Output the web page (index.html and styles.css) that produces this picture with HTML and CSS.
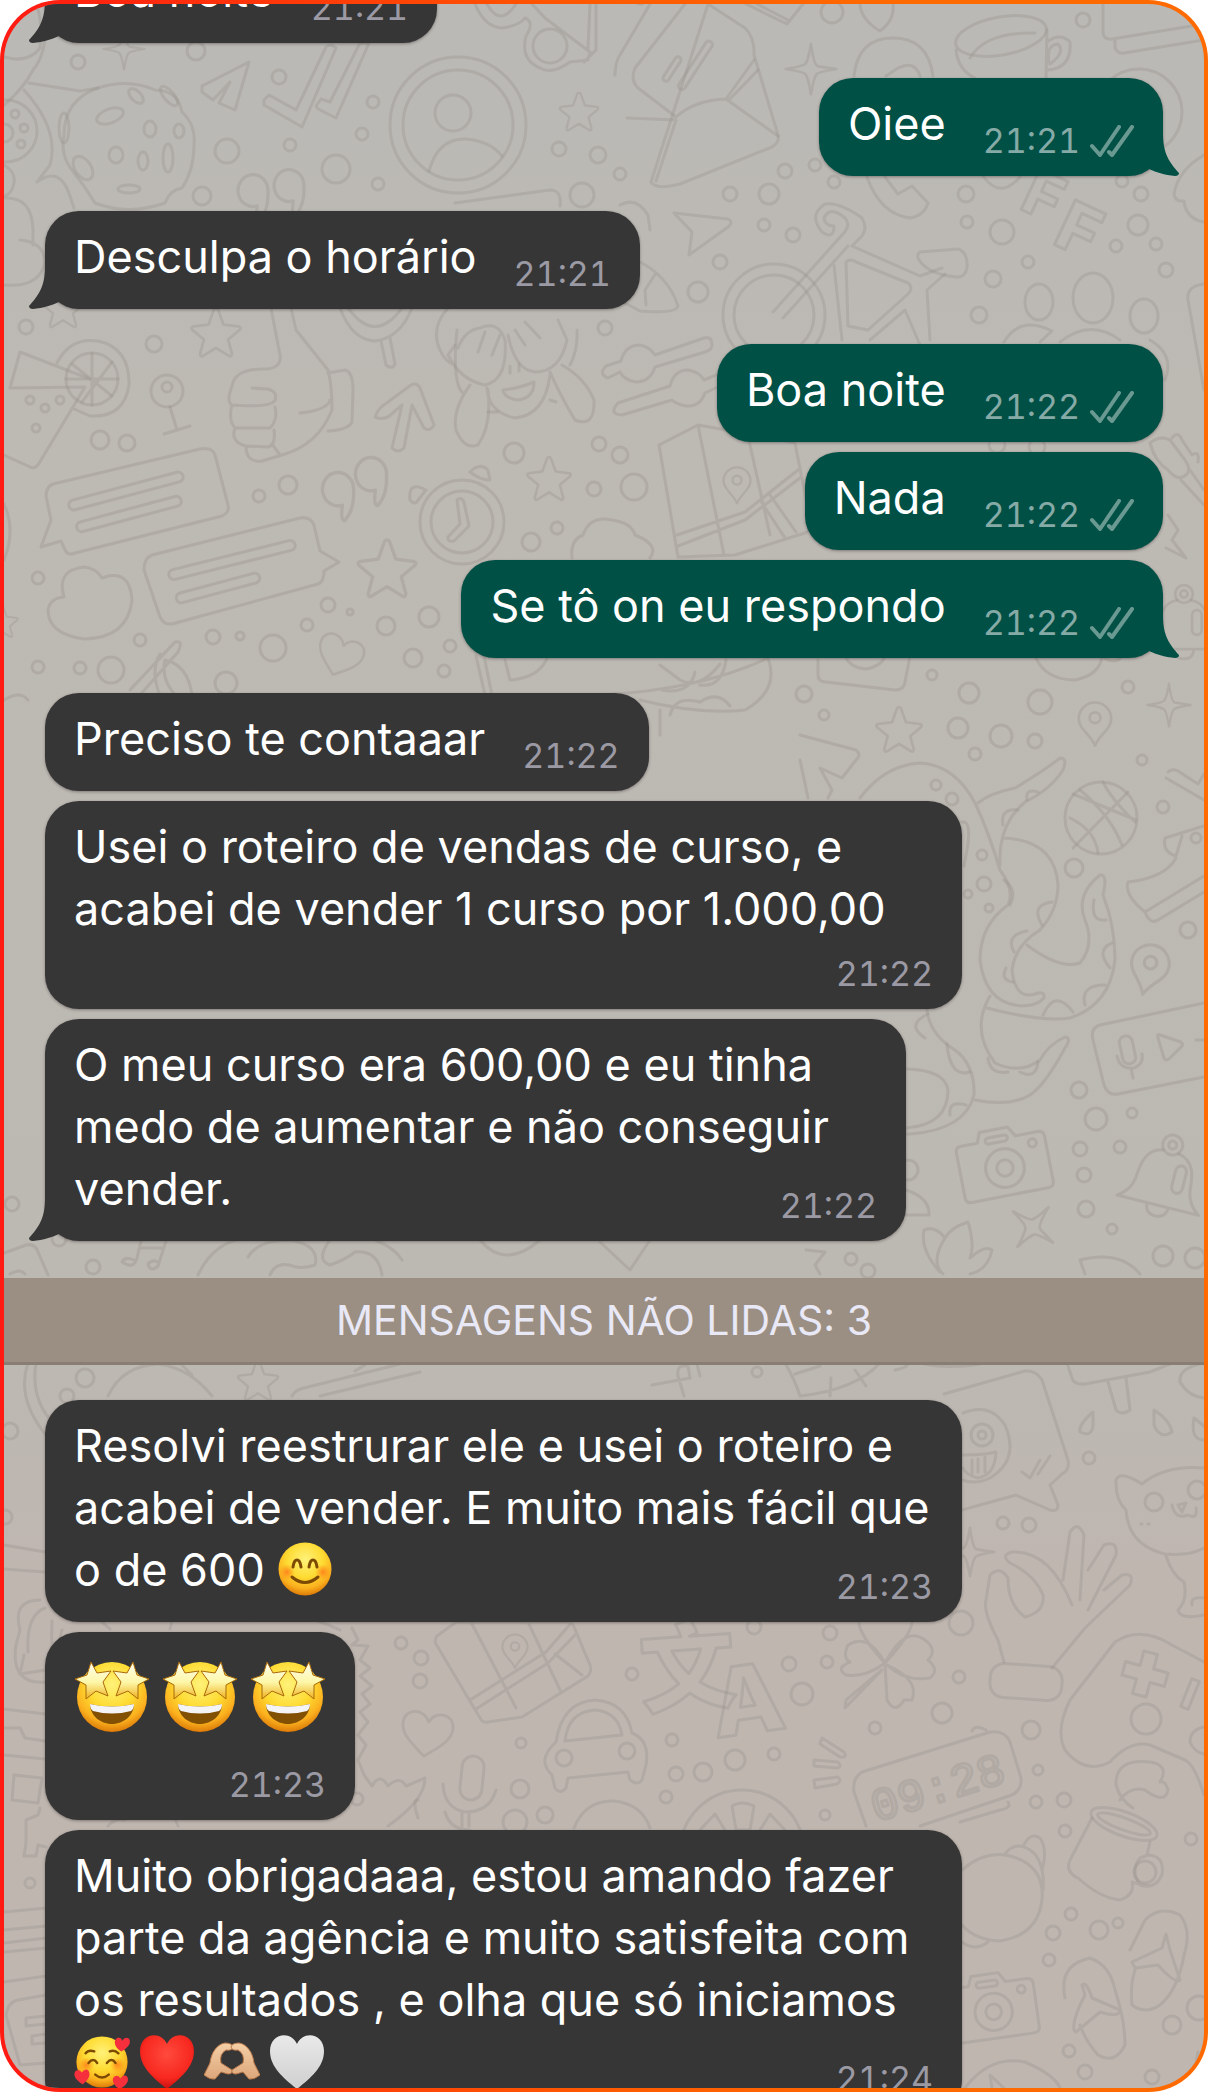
FILE: index.html
```
<!DOCTYPE html>
<html lang="pt-BR">
<head>
    <meta charset="UTF-8">
    <meta name="viewport" content="width=device-width, initial-scale=1.0">
    <title>Conversa</title>
    <link rel="stylesheet" href="styles.css">
</head>
<body>
    <!-- símbolos reutilizados -->
    <svg class="sprite" width="0" height="0" aria-hidden="true">
        <defs>
            <radialGradient id="face" cx="50%" cy="32%" r="68%">
                <stop offset="0" stop-color="#fff27a"/>
                <stop offset="0.5" stop-color="#fedb32"/>
                <stop offset="0.8" stop-color="#fbb01e"/>
                <stop offset="1" stop-color="#dc7a08"/>
            </radialGradient>
            <linearGradient id="star-fill" x1="0" y1="0" x2="0" y2="1">
                <stop offset="0" stop-color="#fffef0"/>
                <stop offset="0.55" stop-color="#fdf7a8"/>
                <stop offset="1" stop-color="#efb01c"/>
            </linearGradient>
            <radialGradient id="blush">
                <stop offset="0" stop-color="#ff7a1a" stop-opacity="0.85"/>
                <stop offset="1" stop-color="#ff8a1a" stop-opacity="0"/>
            </radialGradient>
            <radialGradient id="red-heart" cx="50%" cy="35%" r="65%">
                <stop offset="0" stop-color="#ff4a3d"/>
                <stop offset="0.7" stop-color="#f7281f"/>
                <stop offset="1" stop-color="#c80f10"/>
            </radialGradient>
            <linearGradient id="white-heart" x1="0" y1="0" x2="0" y2="1">
                <stop offset="0" stop-color="#e9e9e9"/>
                <stop offset="1" stop-color="#cfcfcf"/>
            </linearGradient>
            <linearGradient id="skin" x1="0" y1="0" x2="0" y2="1">
                <stop offset="0" stop-color="#f5cfa6"/>
                <stop offset="1" stop-color="#dca67a"/>
            </linearGradient>
        </defs>

        <symbol id="tail" viewBox="0 0 30 42">
            <path d="M16 0C16 20 9 29 0 39Q0 42 4 42C14 41 24 38 30 35V0Z"/>
        </symbol>
        <symbol id="checks" viewBox="0 0 44 32">
            <path d="M2 21L10 30L29 2M19 27L22 30L42 2" fill="none" stroke="currentColor" stroke-width="4" stroke-linecap="round" stroke-linejoin="round"/>
        </symbol>

        <symbol id="emoji-blush" viewBox="0 0 54 54">
            <circle cx="27" cy="27" r="26.500" fill="url(#face)"/>
            <circle cx="9" cy="30" r="8" fill="url(#blush)"/>
            <circle cx="45" cy="30" r="8" fill="url(#blush)"/>
            <path d="M15 25Q16 18 19 18Q22 18 23 25M31 25Q32 18 35 18Q38 18 39 25" fill="none" stroke="#7c4a03" stroke-width="3" stroke-linecap="round"/>
            <path d="M14 35Q27 46 40 35" fill="none" stroke="#7c4a03" stroke-width="3" stroke-linecap="round"/>
        </symbol>
        <symbol id="emoji-star" viewBox="0 0 76 80">
            <circle cx="38" cy="40" r="35" fill="url(#face)"/>
            <path d="M16 47Q38 52 60 47C60 58 50 67 38 67C26 67 16 58 16 47Z" fill="#825003"/>
            <path d="M16 47Q38 52 60 47Q60 52 57 54Q38 59 19 54Q16 52 16 47Z" fill="#f4f4f6"/>
            <g fill="url(#star-fill)" stroke="#a9690a" stroke-width="1" stroke-linejoin="round">
                <path d="M17 5L23 16L37 14L29 25L34 39L22 34L12 42L12 28L1 22L13 18Z"/>
                <path d="M59 5L53 16L39 14L47 25L42 39L54 34L64 42L64 28L75 22L63 18Z"/>
            </g>
        </symbol>
        <symbol id="emoji-love" viewBox="0 0 58 54">
            <circle cx="29" cy="27" r="26.500" fill="url(#face)"/>
            <circle cx="13" cy="30" r="8" fill="url(#blush)"/>
            <circle cx="45" cy="30" r="8" fill="url(#blush)"/>
            <path d="M12 18Q15 14 21 16M37 16Q42 14 46 18M15 28Q20 22 24 28M34 28Q39 22 43 28M22 40Q29 46 36 40" fill="none" stroke="#7c4a03" stroke-width="2.500" stroke-linecap="round"/>
            <g fill="#f5303c">
                <path d="M49 16C42 12 40 5 45 2Q49 1 50 5Q53 0 57 3C60 8 55 13 49 16Z"/>
                <path d="M9 50C2 46 -2 40 2 36Q6 34 8 38Q12 33 15 36C18 41 14 46 9 50Z"/>
                <path d="M47 55C41 51 38 45 42 42Q46 40 48 44Q52 39 55 42C58 47 53 52 47 55Z"/>
            </g>
        </symbol>
        <symbol id="emoji-heart" viewBox="0 0 54 54">
            <path d="M27 54C15 44 0 33 0 16C0 -2 21 -5 27 9C33 -5 54 -2 54 16C54 33 39 44 27 54Z"/>
        </symbol>
        <symbol id="emoji-hands" viewBox="0 0 56 54">
            <g fill="url(#skin)" stroke="#b9794a" stroke-width="1" stroke-linejoin="round">
                <path d="M0 40L6 28C7 18 13 9 21 8Q28 8 29 12Q28 16 22 15Q15 19 17 28L28 35Q29 39 24 39L17 37L11 44Q6 45 0 40Z"/>
                <path d="M56 40L50 28C49 18 43 9 35 8Q28 8 27 12Q28 16 34 15Q41 19 39 28L28 35Q27 39 32 39L39 37L45 44Q50 45 56 40Z"/>
            </g>
        </symbol>

        <!-- desenhos do papel de parede -->
        <symbol id="d-star" viewBox="-30 -30 60 60" overflow="visible">
            <path d="M0 -26Q2 -27 3 -23L8 -9L24 -7Q28 -6 25 -3L13 7L17 22Q17 27 13 24L0 16L-13 24Q-17 27 -17 22L-13 7L-25 -3Q-28 -6 -24 -7L-8 -9L-3 -23Q-2 -27 0 -26Z"/>
        </symbol>
        <symbol id="d-spark" viewBox="-30 -30 60 60" overflow="visible">
            <path d="M0 -28Q3 -4 8 -3L28 0Q8 3 6 6Q3 10 0 28Q-3 10 -6 6Q-8 3 -28 0Q-8 -3 -6 -6Q-3 -10 0 -28Z"/>
        </symbol>
        <symbol id="d-camera" viewBox="-50 -40 100 80" overflow="visible">
            <path d="M-38 -24H-22L-18 -34H10L16 -24H38Q44 -24 44 -18V26Q44 32 38 32H-38Q-44 32 -44 26V-18Q-44 -24 -38 -24Z"/>
            <circle r="19" cy="5"/><circle r="8" cy="5"/><circle r="4" cx="31" cy="-14"/>
            <rect x="-14" y="-27" width="22" height="6" rx="3"/>
        </symbol>
        <symbol id="d-pin" viewBox="-20 -20 40 50" overflow="visible">
            <path d="M0 28C-5 15 -18 10 -18 -2A18 18 0 0 1 18 -2C18 10 5 15 0 28Z"/>
            <circle r="6" cy="-3"/>
        </symbol>
        <symbol id="d-quote" viewBox="-15 -20 30 45" overflow="visible">
            <path d="M4 8A14 15 0 1 1 14 -6Q15 12 6 22Q2 22 4 8Z"/>
        </symbol>
        <symbol id="d-heart" viewBox="-30 -30 60 60" overflow="visible">
            <path d="M0 25C-12 15 -27 6 -27 -8C-27 -24 -6 -26 0 -12C6 -26 27 -24 27 -8C27 6 12 15 0 25Z"/>
        </symbol>
        <symbol id="d-bell" viewBox="-45 -45 90 90" overflow="visible">
            <circle cy="-36" r="10"/><circle cy="-36" r="4"/>
            <path d="M-8 -29C-26 -26 -27 -8 -28 5Q-30 18 -42 26H42Q30 18 28 5C27 -8 26 -26 8 -29M-11 27Q-10 37 0 37Q10 37 11 27"/>
            <rect x="9" y="-18" width="11" height="28" rx="6"/>
        </symbol>
    </svg>

    <main class="frame">
        <div class="chat">
            <svg class="wallpaper" viewBox="0 0 1208 2092" preserveAspectRatio="xMidYMin slice" aria-hidden="true">
                <g>
                    <!-- bolinhas -->
                    <circle cx="78" cy="62" r="7"/><circle cx="196" cy="51" r="9"/><circle cx="279" cy="77" r="7"/><circle cx="373" cy="102" r="6"/><circle cx="362" cy="134" r="6"/><circle cx="290" cy="145" r="6"/><circle cx="227" cy="151" r="12"/><circle cx="336" cy="169" r="14"/><circle cx="202" cy="196" r="9"/><circle cx="378" cy="184" r="6"/><circle cx="559" cy="149" r="7"/><circle cx="598" cy="155" r="8"/><circle cx="582" cy="195" r="12"/>
                    <circle cx="1083" cy="20" r="7"/><circle cx="832" cy="12" r="11"/><circle cx="620" cy="174" r="6"/><circle cx="785" cy="171" r="7"/><circle cx="815" cy="165" r="6"/><circle cx="834" cy="182" r="6"/><circle cx="769" cy="194" r="10"/><circle cx="730" cy="194" r="7"/><circle cx="966" cy="194" r="8"/><circle cx="967" cy="222" r="6"/><circle cx="1002" cy="232" r="12"/><circle cx="1141" cy="194" r="7"/><circle cx="1138" cy="225" r="10"/><circle cx="1156" cy="244" r="6"/><circle cx="1116" cy="246" r="6"/><circle cx="1166" cy="270" r="7"/><circle cx="1028" cy="262" r="6"/><circle cx="993" cy="279" r="8"/><circle cx="979" cy="315" r="8"/><circle cx="764" cy="225" r="6"/><circle cx="793" cy="235" r="7"/><circle cx="720" cy="262" r="7"/><circle cx="698" cy="292" r="10"/><circle cx="1122" cy="181" r="6"/>
                    <circle cx="26" cy="327" r="7"/><circle cx="154" cy="344" r="8"/><circle cx="100" cy="440" r="9"/><circle cx="127" cy="443" r="8"/><circle cx="38" cy="578" r="6"/><circle cx="259" cy="496" r="6"/><circle cx="288" cy="485" r="9"/><circle cx="38" cy="667" r="6"/><circle cx="80" cy="668" r="6"/><circle cx="140" cy="640" r="6"/><circle cx="213" cy="637" r="7"/><circle cx="240" cy="636" r="4"/><circle cx="273" cy="648" r="13"/><circle cx="111" cy="670" r="13"/><circle cx="307" cy="625" r="6"/><circle cx="328" cy="605" r="7"/><circle cx="350" cy="612" r="3"/><circle cx="386" cy="626" r="9"/><circle cx="429" cy="617" r="10"/><circle cx="413" cy="658" r="9"/><circle cx="450" cy="646" r="6"/><circle cx="444" cy="671" r="6"/><circle cx="514" cy="453" r="10"/><circle cx="594" cy="489" r="7"/><circle cx="599" cy="444" r="7"/><circle cx="531" cy="542" r="9"/><circle cx="557" cy="528" r="6"/><circle cx="226" cy="683" r="11"/><circle cx="605" cy="328" r="7"/>
                    <circle cx="634" cy="487" r="13"/><circle cx="620" cy="455" r="8"/><circle cx="969" cy="693" r="10"/><circle cx="932" cy="675" r="5"/><circle cx="1040" cy="702" r="12"/><circle cx="1128" cy="687" r="6"/><circle cx="804" cy="694" r="8"/><circle cx="997" cy="445" r="8"/><circle cx="1037" cy="447" r="8"/>
                    <circle cx="958" cy="728" r="10"/><circle cx="1001" cy="736" r="11"/><circle cx="1035" cy="741" r="7"/><circle cx="975" cy="754" r="6"/><circle cx="824" cy="715" r="5"/><circle cx="1142" cy="760" r="5"/><circle cx="1163" cy="807" r="6"/><circle cx="1074" cy="868" r="9"/><circle cx="1188" cy="930" r="8"/><circle cx="1079" cy="1090" r="8"/><circle cx="1096" cy="1119" r="11"/><circle cx="1132" cy="1113" r="5"/><circle cx="1080" cy="1149" r="7"/><circle cx="1120" cy="1147" r="6"/><circle cx="1084" cy="1175" r="7"/><circle cx="1086" cy="1209" r="8"/><circle cx="1112" cy="1229" r="5"/><circle cx="1163" cy="1256" r="10"/><circle cx="1195" cy="1258" r="10"/><circle cx="936" cy="785" r="5"/><circle cx="952" cy="799" r="6"/><circle cx="982" cy="855" r="5"/><circle cx="984" cy="884" r="7"/><circle cx="968" cy="894" r="4"/><circle cx="989" cy="908" r="4"/><circle cx="908" cy="1170" r="10"/><circle cx="851" cy="1259" r="6"/><circle cx="868" cy="1271" r="7"/>
                    <circle cx="12" cy="1204" r="7"/><circle cx="59" cy="1239" r="7"/><circle cx="93" cy="1267" r="7"/><circle cx="85" cy="1378" r="9"/><circle cx="67" cy="1396" r="7"/><circle cx="10" cy="1431" r="8"/><circle cx="757" cy="1372" r="5"/><circle cx="5" cy="1517" r="7"/><circle cx="1089" cy="1458" r="6"/><circle cx="1003" cy="1523" r="6"/><circle cx="1029" cy="1525" r="7"/><circle cx="961" cy="1623" r="12"/><circle cx="754" cy="1627" r="7"/><circle cx="830" cy="1633" r="7"/><circle cx="789" cy="1664" r="7"/><circle cx="827" cy="1662" r="6"/><circle cx="802" cy="1694" r="11"/><circle cx="959" cy="1677" r="6"/><circle cx="942" cy="1713" r="10"/><circle cx="875" cy="1728" r="6"/><circle cx="672" cy="1740" r="6"/><circle cx="735" cy="1760" r="10"/><circle cx="774" cy="1754" r="6"/><circle cx="676" cy="1774" r="7"/><circle cx="703" cy="1772" r="9"/><circle cx="666" cy="1797" r="6"/><circle cx="1031" cy="1730" r="9"/><circle cx="1038" cy="1770" r="5"/><circle cx="1036" cy="1802" r="6"/><circle cx="1064" cy="1800" r="7"/><circle cx="1065" cy="1831" r="6"/><circle cx="1191" cy="1839" r="6"/><circle cx="825" cy="1815" r="5"/>
                    <circle cx="1071" cy="1914" r="6"/><circle cx="1099" cy="1930" r="9"/><circle cx="1118" cy="1923" r="5"/><circle cx="1053" cy="1933" r="7"/><circle cx="1049" cy="1960" r="6"/><circle cx="1172" cy="2025" r="9"/><circle cx="1069" cy="2051" r="6"/><circle cx="1085" cy="2072" r="7"/><circle cx="1152" cy="2077" r="7"/><circle cx="1199" cy="2008" r="12"/><circle cx="401" cy="1643" r="6"/><circle cx="421" cy="1658" r="7"/><circle cx="420" cy="1681" r="7"/><circle cx="632" cy="1674" r="6"/><circle cx="521" cy="1743" r="5"/><circle cx="520" cy="1789" r="9"/><circle cx="515" cy="1822" r="12"/><circle cx="545" cy="1815" r="8"/><circle cx="357" cy="1799" r="6"/><circle cx="30" cy="1883" r="5"/>

                    <!-- estrelas, brilhos e corações -->
                    <use href="#d-star" x="557" y="90" width="44" height="44"/>
                    <use href="#d-star" x="40" y="285" width="46" height="46"/>
                    <use href="#d-star" x="188" y="305" width="56" height="56"/>
                    <use href="#d-star" x="524" y="454" width="50" height="50"/>
                    <use href="#d-star" x="354" y="536" width="66" height="66"/>
                    <use href="#d-star" x="873" y="704" width="52" height="52"/>
                    <use href="#d-star" x="-16" y="602" width="36" height="40"/>
                    <use href="#d-star" x="235" y="1358" width="46" height="46"/>
                    <use href="#d-spark" x="102" y="27" width="44" height="44"/>
                    <use href="#d-spark" x="784" y="42" width="54" height="54"/>
                    <use href="#d-spark" x="1146" y="682" width="46" height="46"/>
                    <use href="#d-spark" x="-27" y="-27" width="54" height="54" transform="translate(1033 1227) rotate(38)"/>
                    <use href="#d-spark" x="944" y="1522" width="52" height="60"/>
                    <use href="#d-heart" x="-25" y="-25" width="50" height="50" transform="translate(340 655) rotate(20)"/>
                    <use href="#d-heart" x="-28" y="-28" width="56" height="56" transform="translate(427 1733) rotate(8)"/>

                    <!-- topo esquerdo -->
                    <ellipse cx="458" cy="125" rx="68" ry="68"/><ellipse cx="458" cy="125" rx="55" ry="55"/>
                    <circle cx="453" cy="113" r="18"/><path d="M429 171Q438 138 466 139Q490 141 502 156"/>
                    <path d="M264 100L269 95L296 110L326 47Q331 43 336 48L302 127L264 105Z"/>
                    <path d="M316 106L321 99L330 102L360 43H369L336 118L318 109Z"/>
                    <path d="M249 62L202 86V92L213 100L230 82L219 103L235 110Z"/>
                    <path d="M98 88Q128 78 155 90Q178 90 182 112Q196 125 194 145Q194 170 182 188Q170 190 165 203Q128 216 95 203Q84 185 72 170Q60 155 64 135Q64 100 98 88Z"/>
                    <ellipse cx="136" cy="96" rx="9" ry="5" transform="rotate(45 136 96)"/><ellipse cx="169" cy="96" rx="12" ry="5" transform="rotate(50 169 96)"/><ellipse cx="110" cy="116" rx="14" ry="7" transform="rotate(-20 110 116)"/><ellipse cx="150" cy="129" rx="6" ry="8"/><ellipse cx="179" cy="131" rx="5" ry="7"/><ellipse cx="116" cy="155" rx="7" ry="8"/><ellipse cx="143" cy="161" rx="5" ry="9"/><ellipse cx="168" cy="158" rx="5" ry="14"/><ellipse cx="83" cy="168" rx="8" ry="13" transform="rotate(-35 83 168)"/><ellipse cx="129" cy="189" rx="11" ry="4"/><ellipse cx="64" cy="128" rx="5" ry="15"/>
                    <path d="M4 57Q28 64 40 48Q43 20 36 4M4 105Q24 88 33 70Q42 60 45 40M29 83L80 91L98 88M24 90Q60 130 50 165L37 182Q60 165 70 196L74 208M4 198Q32 196 33 230V245M20 240Q44 242 45 262Q40 288 4 285"/>
                    <circle cx="6" cy="131" r="31"/><circle cx="15" cy="114" r="4"/><circle cx="24" cy="128" r="4"/><circle cx="21" cy="144" r="4"/><circle cx="4" cy="133" r="9"/><path d="M4 165Q16 172 14 183Q12 194 4 196"/>
                    <use href="#d-quote" x="236" y="176" width="34" height="48"/><use href="#d-quote" x="272" y="171" width="34" height="48"/>
                    <path d="M475 4Q485 28 503 28Q520 25 525 18Q535 22 526 36Q520 60 540 68Q552 75 570 62L588 60L590 52L545 18L532 4M590 4L588 48M596 4V50L584 62"/>
                    <circle cx="550" cy="46" r="17"/><path d="M487 4Q500 28 516 4M455 203L550 190Q562 190 560 206"/>

                    <!-- topo direito -->
                    <path d="M615 75Q615 62 620 55L650 4M708 4L745 28Q755 38 754 55L778 135Q780 142 772 147L680 184Q655 190 651 182Z"/>
                    <path d="M685 4L635 68Q630 80 638 88L676 117Q695 100 726 99L754 60M627 118L676 120L656 181M726 99L778 136M729 100L758 70"/>
                    <rect x="-3" y="-28" width="7" height="56" rx="3" transform="translate(695 65) rotate(33)"/><rect x="-3" y="-14" width="6" height="28" rx="3" transform="translate(672 69) rotate(33)"/>
                    <path d="M854 76Q858 38 893 38Q928 38 933 76M886 76L898 68Q915 60 920 76M860 4Q861 20 880 31Q895 20 893 4"/>
                    <path d="M746 4L787 24L803 4M757 4L788 20M638 4L642 4"/>
                    <ellipse cx="1001" cy="36" rx="46" ry="19" transform="rotate(-10 1001 36)"/><path d="M956 50Q958 70 975 78M1047 30L1046 78M970 58Q985 32 1035 33M1047 42Q1060 32 1070 42Q1072 68 1048 70M1049 62Q1046 45 1058 44Q1066 52 1050 64"/>
                    <path d="M1103 4V34Q1105 40 1112 39L1204 24M1115 40V48Q1118 54 1124 53L1204 40"/>
                    <circle cx="1139" cy="112" r="43"/>
                    <path d="M867 177Q880 214 910 218Q924 216 928 203L912 186L898 194L885 177M674 213L728 219Q734 222 728 227L689 255L692 232Z"/>
                    <path d="M983 176Q1000 200 1020 177M1204 155Q1178 170 1174 194Q1175 202 1184 201Q1186 219 1204 222"/>
                    <circle cx="774" cy="315" r="51"/><circle cx="774" cy="315" r="40"/>
                    <path d="M773 312L842 235Q852 225 845 218Q830 205 824 218Q825 226 834 226Q834 240 822 232Q808 215 825 204Q840 202 862 218Q868 228 862 236L852 246L920 276L942 268M783 318L848 246M846 262Q850 258 856 262L908 283Q914 288 908 294L868 330L848 326ZM834 265L842 340M945 274L927 290L930 340M905 310L920 345M870 340L905 310"/>
                    <path d="M920 252L958 249Q968 252 967 268Q965 278 956 277Q926 274 918 258Q917 254 920 252Z"/>
                    <ellipse cx="1039" cy="302" rx="14" ry="18"/><ellipse cx="1093" cy="298" rx="20" ry="25"/><ellipse cx="1144" cy="316" rx="14" ry="17"/>
                    <path d="M1004 342Q1020 315 1052 331L1040 342M1060 342Q1090 318 1120 340M1150 340Q1175 355 1165 380M1204 284Q1186 286 1188 300L1204 390"/>
                    <path d="M636 260Q668 275 678 306Q676 314 640 311L625 303M656 273L645 290L646 305M620 205Q636 196 648 215L650 230"/>
                    <text class="doodle-letter" x="0" y="0" font-size="62" transform="translate(1018 208) rotate(25)">F</text>
                    <text class="doodle-letter" x="0" y="0" font-size="68" transform="translate(1051 243) rotate(25)">F</text>

                    <!-- faixa 310-700 esquerda -->
                    <path d="M20 352L10 388L85 387L38 465Q34 470 28 466L4 455M20 352L90 379M57 363Q70 337 98 341Q130 348 129 385Q124 418 90 416L72 408"/>
                    <circle cx="92" cy="379" r="26"/><path d="M92 353V405M72 364L112 396M112 362L82 402M66 379H118"/><circle cx="30" cy="400" r="4"/><circle cx="45" cy="408" r="4"/><circle cx="60" cy="400" r="4"/><circle cx="36" cy="428" r="4"/>
                    <circle cx="167" cy="391" r="16"/><circle cx="167" cy="387" r="5"/><path d="M170 407L177 430M164 434L190 426"/>
                    <path d="M271 308L280 355Q282 368 266 369Q235 368 232 386Q226 402 232 405Q228 420 235 428Q230 442 246 446Q246 463 262 461L282 455Q318 445 332 410Q332 385 328 370L296 330L291 308M252 388L268 389Q278 392 275 400Q272 408 232 405M275 407Q278 420 270 428L235 428M274 430Q276 445 268 447L246 446M272 444L280 455M300 413Q328 410 330 400M328 373L345 370Q353 372 353 390L352 422Q348 430 328 431"/>
                    <path d="M375 417Q378 408 388 402L411 385Q417 382 420 388L434 425Q430 432 424 428L412 405L404 448Q398 454 392 448L402 405L388 417Q380 420 375 417Z"/>
                    <path d="M340 308Q352 340 375 341Q400 338 412 308M348 308Q375 345 402 308M381 341L386 365Q392 370 395 364L390 338"/>
                    <path d="M448 308Q430 328 440 350Q445 362 455 365M455 345L448 355Q460 380 485 385Q508 380 505 340Q498 320 480 328Q465 330 458 348M508 335Q515 370 535 372Q560 372 567 340L558 320M515 330L525 345M525 322L540 338M485 332L478 352M500 335L492 355M470 385Q452 410 456 430Q464 450 478 445Q492 425 488 390M550 372Q560 395 575 420Q595 428 594 400Q585 378 562 365M487 388Q488 412 515 418Q545 415 550 375M503 390Q520 388 534 382Q534 398 518 400Q504 398 503 390Z"/>
                    <path d="M510 366V373M519 364V371M457 330Q452 380 462 392M577 330Q578 350 570 365M488 412H497M550 400L556 402"/>
                    <path d="M53 484L200 449Q212 447 215 455L228 505Q230 512 222 516L75 553Q68 556 65 550L61 541L41 547L51 520L46 496Q46 487 53 484Z"/>
                    <rect x="-59" y="-5" width="118" height="10" rx="5" transform="translate(126 491) rotate(-15)"/><rect x="-54" y="-5" width="108" height="10" rx="5" transform="translate(129 514) rotate(-15)"/>
                    <path d="M152 555L300 518Q310 516 314 525L320 551L339 562L324 571Q324 582 318 584L172 624Q164 625 160 617L144 570Q144 558 152 555Z"/>
                    <rect x="-65" y="-5" width="130" height="10" rx="5" transform="translate(232 560) rotate(-14)"/><rect x="-43" y="-5" width="86" height="10" rx="5" transform="translate(218 588) rotate(-15)"/>
                    <use href="#d-quote" x="320" y="474" width="36" height="50"/><use href="#d-quote" x="353" y="459" width="36" height="50"/>
                    <circle cx="462" cy="522" r="42"/><circle cx="462" cy="522" r="31"/><path d="M457 500Q461 496 464 502L469 526L454 541Q447 542 448 537L460 524ZM426 490Q408 480 410 500Q415 506 418 500ZM470 472Q480 462 488 470L490 480Q480 480 470 472Z"/>
                    <path d="M64 597Q56 570 84 567Q96 568 102 578Q130 568 132 600Q128 638 84 639Q48 634 48 610Q50 598 64 597Z"/>
                    <path d="M130 690L175 642Q184 640 178 652L140 695M160 654Q150 670 160 696M165 660Q188 665 192 695M165 660Q160 680 178 698M4 504Q16 530 4 560M4 700Q20 690 28 700"/>
                    <path d="M572 558Q570 540 583 535Q590 515 612 520Q632 523 635 535Q660 545 650 558M476 656L485 695M484 656L492 695M505 660L510 680Q540 678 548 656"/>

                    <!-- faixa 340-720 direita -->
                    <path d="M606 366L621 361Q625 345 640 345Q650 347 655 355L704 338Q712 336 712 345Q712 350 705 352L655 367Q650 382 636 382Q624 380 620 372L608 378Q598 374 606 366ZM618 403L670 386Q674 370 688 370Q700 372 704 380L716 375Q724 374 722 385L705 393Q700 407 686 406Q676 404 672 400L622 415Q608 414 618 403Z"/>
                    <path d="M659 445L698 425L760 436L795 443L811 525Q812 530 805 533L735 555L678 557ZM677 535L745 512L798 470M678 546L745 520L800 478M698 425L724 555M748 436L770 535M760 500L785 538M770 495L796 532"/>
                    <use href="#d-pin" x="722" y="466" width="30" height="40"/>
                    <path d="M1150 443Q1160 435 1170 440L1185 460Q1192 470 1186 475Q1178 482 1168 470Q1155 462 1150 443ZM1172 438Q1178 430 1182 440L1192 455Q1200 450 1198 462M1181 480L1204 505M1190 470L1204 490M1168 515L1178 530L1172 540L1186 558L1166 548"/>
                    <use href="#d-bell" x="1144" y="586" width="80" height="80"/>
                    <path d="M600 695Q700 690 768 658Q780 690 745 710Q700 715 640 700M660 665L680 680Q700 690 720 664M662 690Q690 695 695 672M700 685Q722 688 726 660M670 715Q675 695 700 702Q718 690 730 706M818 660L818 675Q818 682 826 682L895 690Q904 690 905 682L910 656M845 656Q850 668 866 669Q882 666 885 656M1035 656Q1045 680 1075 680Q1100 675 1102 656M1100 656Q1120 668 1125 650"/>
                    <path d="M660 735L660 710M800 735L856 750Q862 755 856 760L842 778L820 768L832 790L828 798M800 760L808 798"/>

                    <!-- meio direito -->
                    <use href="#d-pin" x="1077" y="700" width="36" height="50"/><use href="#d-pin" x="-21" y="-23" width="42" height="58" transform="translate(1150 965) rotate(14)"/>
                    <circle cx="1101" cy="818" r="36"/><path d="M1073 794L1136 820M1070 818Q1095 830 1098 853M1073 848L1128 792M1103 782Q1112 800 1135 822M1080 790Q1110 815 1122 845"/>
                    <path d="M860 798Q885 765 920 763Q955 765 975 803Q988 830 1000 870Q1015 890 1008 905Q980 925 980 960Q985 1000 1015 1005Q1035 1008 1044 998Q1045 990 1035 994Q1015 1000 1012 970Q1015 945 1040 930Q1058 910 1058 885Q1055 840 1003 838M978 803Q990 793 1015 788Q1045 770 1060 758Q1068 758 1063 770Q1050 790 1025 802Q998 825 1000 865M1027 945Q1060 970 1080 963Q1095 945 1085 920Q1075 895 1100 875Q1108 874 1103 895Q1115 925 1115 960Q1110 1005 1070 1018Q1040 1022 987 1008M990 996Q970 1030 995 1063Q1020 1075 1040 1060Q1048 1045 1065 1037Q1072 1038 1065 1048Q1045 1085 1030 1095Q1010 1107 975 1100M927 1010Q930 1035 955 1050Q975 1065 974 1095Q965 1130 910 1134H890M906 1069Q945 1070 948 1090Q948 1125 906 1128"/>
                    <path d="M1003 825Q1000 808 1018 810M1027 800Q1025 788 1038 792M1042 925Q1030 905 1052 902M1014 952Q1005 935 1027 931M1013 982Q1000 980 1006 968M1094 900Q1090 922 1106 920M1112 943Q1095 950 1110 968M1085 1005Q1080 985 1105 985M1043 1015Q1055 988 1073 1012M988 1058Q990 1075 1008 1072M1020 1072Q1036 1080 1038 1062M947 1044Q950 1078 970 1072M928 1014Q905 1025 925 1038M950 1115Q948 1100 966 1105M1004 880Q1018 890 1010 905M962 822Q972 820 967 850L964 866"/>
                    <path d="M1204 826L1165 838Q1162 852 1176 856L1182 836M1176 858Q1165 878 1128 882Q1124 895 1145 912L1204 876M1145 912Q1150 925 1158 920L1204 892M1168 772Q1172 768 1178 771L1198 784L1204 774M1166 778L1204 800"/>
                    <circle cx="1196" cy="838" r="5"/>
                    <path d="M1204 1003L1100 1025Q1090 1028 1093 1040L1104 1085Q1108 1096 1118 1094L1204 1077M1160 1035Q1157 1033 1158 1038L1164 1058Q1166 1062 1170 1058L1182 1046Q1184 1043 1178 1041ZM1196 1040H1204M1117 1056Q1120 1070 1134 1068Q1144 1064 1142 1054M1131 1068L1133 1078"/>
                    <rect x="-6" y="-14" width="13" height="28" rx="6" transform="translate(1127 1050) rotate(-12)"/>
                    <use href="#d-camera" x="-51" y="-41" width="102" height="82" transform="translate(1004 1163) rotate(-11)"/>
                    <use href="#d-bell" x="-45" y="-45" width="90" height="90" transform="translate(1164 1180) rotate(14)"/>
                    <path d="M940 1272Q920 1250 924 1230Q935 1225 945 1238Q950 1228 968 1222Q975 1245 970 1258Q985 1245 992 1250Q988 1270 970 1274M945 1238Q930 1262 943 1274M906 1190Q930 1198 929 1215H906M1080 1260Q1120 1250 1140 1274M1080 1260L1085 1274M806 1250L825 1252L815 1265L820 1274"/>

                    <!-- em volta da faixa de não lidas -->
                    <path d="M4 1253L26 1245Q35 1243 38 1252L48 1275M10 1274Q20 1268 25 1274M141 1241L137 1258Q134 1270 122 1262Q125 1256 134 1260M166 1241L158 1266Q150 1273 148 1264Q152 1259 158 1262M141 1248H163"/>
                    <path d="M198 1275Q212 1245 240 1239M248 1257Q258 1240 290 1240Q320 1245 315 1265Q300 1270 290 1265Q275 1262 270 1275M330 1240Q315 1260 330 1265Q345 1260 355 1252Q378 1250 382 1275M375 1240Q395 1248 402 1260M480 1240Q505 1270 540 1240M600 1242L630 1270L650 1240"/>
                    <path d="M28 1363Q15 1400 50 1440M36 1363Q30 1400 55 1425M108 1396Q122 1366 158 1364Q190 1368 212 1396M180 1363L192 1375M292 1396Q295 1390 304 1388L400 1364M320 1396L420 1372M355 1371L368 1363M652 1385L690 1378L688 1366Q676 1364 678 1376L684 1396M700 1376L697 1364M785 1363Q795 1380 800 1396M795 1374L820 1366M831 1378L830 1396M855 1370L866 1386M800 1396Q855 1390 880 1363M895 1370Q912 1366 905 1364M920 1363Q950 1370 985 1363"/>

                    <!-- direita inferior -->
                    <path d="M944 1394L1025 1371Q1036 1370 1042 1380L1068 1460Q1070 1470 1062 1474L1050 1485L1058 1505Q1058 1512 1050 1510L1016 1495L962 1510M963 1413Q990 1402 1005 1425Q1020 1460 990 1478Q975 1485 963 1480M963 1455Q985 1455 996 1452Q995 1475 978 1478Q966 1475 963 1468M972 1460V1474M978 1459V1472M985 1457V1472M1022 1472L1030 1478L1040 1460M1038 1474L1050 1456"/>
                    <circle cx="982" cy="1435" r="11"/><circle cx="982" cy="1435" r="4"/>
                    <path d="M1067 1363L1072 1378Q1074 1385 1085 1384L1150 1372Q1165 1366 1172 1363M1108 1382L1116 1410Q1122 1416 1130 1410L1126 1378M1204 1363Q1178 1368 1180 1382Q1188 1396 1204 1398"/>
                    <path d="M1093 1412Q1078 1425 1080 1432Q1092 1438 1093 1425ZM1154 1410Q1170 1420 1172 1432Q1160 1440 1154 1425ZM1194 1418L1204 1426M1194 1418Q1190 1440 1204 1440"/>
                    <path d="M1204 1468Q1165 1465 1142 1484Q1120 1470 1116 1480Q1115 1500 1126 1510Q1128 1545 1165 1554Q1190 1556 1204 1548M1166 1556Q1172 1575 1184 1582Q1188 1600 1178 1610Q1180 1620 1204 1615M1192 1605Q1190 1596 1204 1598M1172 1505Q1175 1520 1188 1515Q1198 1520 1196 1508M1178 1505L1186 1503L1182 1512ZM1141 1524H1142M1148 1524H1149"/>
                    <circle cx="1154" cy="1502" r="9"/><circle cx="1197" cy="1490" r="9"/>
                    <path d="M1004 1662L998 1640Q983 1612 986 1600L990 1575Q1000 1565 1008 1578Q1008 1605 1025 1617Q1045 1612 1043 1595Q1035 1575 1010 1563Q1000 1555 1012 1552Q1050 1550 1072 1605M1063 1580L1070 1532Q1078 1520 1084 1535L1080 1600M1088 1570L1104 1545Q1118 1540 1116 1555L1088 1610M1104 1590L1122 1575Q1135 1572 1130 1585L1085 1628L1052 1668"/>
                    <rect x="-36" y="-17" width="72" height="34" rx="14" transform="translate(1026 1682) rotate(4)"/>
                    <path d="M1204 1662L1172 1645Q1140 1625 1115 1642L1070 1700Q1055 1730 1065 1750Q1085 1775 1110 1762Q1130 1740 1150 1745L1185 1760Q1195 1765 1204 1795"/>
                    <path d="M-7 -22H7V-7H22V7H7V22H-7V7H-22V-7H-7Z" transform="translate(1145 1674) rotate(15)"/>
                    <rect x="-4" y="-15" width="8" height="30" transform="translate(1190 1694) rotate(22)"/>
                    <circle cx="1146" cy="1719" r="15"/><path d="M1204 1727Q1190 1730 1190 1742Q1194 1752 1204 1754"/>
                    <path d="M866 1826L854 1792Q852 1778 862 1772L990 1732Q1005 1730 1010 1742L1021 1778Q1022 1790 1012 1795L920 1826M972 1731Q975 1724 986 1730M960 1822L1000 1810Q1012 1808 1008 1802"/>
                    <text class="doodle-clock" x="0" y="0" font-size="46" transform="translate(876 1822) rotate(-17)">09:28</text>
                    <path d="M822 1738L844 1752Q848 1758 840 1757L820 1744ZM814 1760L838 1762Q842 1766 838 1768L814 1766ZM814 1780L838 1777Q842 1781 837 1784L815 1788Z"/>
                    <path d="M1120 1800Q1130 1786 1145 1790Q1165 1805 1168 1790Q1165 1780 1160 1782Q1170 1765 1150 1762Q1115 1758 1116 1785Q1120 1800 1133 1808"/>
                    <ellipse cx="1124" cy="1824" rx="35" ry="12" transform="rotate(20 1124 1824)"/><ellipse cx="1124" cy="1824" rx="28" ry="6" transform="rotate(20 1124 1824)"/>
                    <path d="M1092 1818L1070 1860Q1065 1872 1078 1878Q1100 1898 1120 1900Q1135 1895 1132 1882Q1140 1885 1150 1886M1150 1842L1147 1855Q1165 1855 1162 1875Q1155 1890 1140 1885Q1130 1870 1140 1858L1148 1855"/><circle cx="1145" cy="1872" r="11"/>
                    <path d="M962 1870Q985 1850 1010 1856Q1045 1865 1042 1900Q1038 1935 1000 1941Q975 1940 962 1925M1004 1855Q1015 1840 1030 1850Q1045 1860 1043 1890M1024 1845Q1030 1832 1040 1838Q1048 1850 1042 1870M962 1942Q975 1952 988 1942"/>
                    <use href="#d-camera" x="-49" y="-40" width="98" height="80" transform="translate(993 2007) rotate(-8)"/>
                    <path d="M1130 1950Q1140 1930 1145 1920Q1160 1905 1180 1915Q1192 1930 1184 1955Q1178 1990 1160 2005Q1145 2015 1132 2005Q1130 1985 1135 1970M1132 1962L1162 1948L1166 1934L1170 1950L1180 1980Q1175 1984 1158 1965L1135 1968ZM1065 1998Q1058 1965 1090 1958Q1110 1965 1115 1990Q1125 2020 1125 2045Q1115 2065 1098 2055Q1085 2040 1080 2025M1074 2030Q1072 2020 1085 1995L1082 1985Q1086 1980 1092 1998L1120 2010Q1120 2018 1100 2012L1076 2032Z"/>
                    <path d="M965 2088Q990 2055 1025 2062Q1055 2075 1060 2088M992 2088L990 2075L1004 2088M1192 2088L1198 2052"/>

                    <!-- base central e esquerda -->
                    <path d="M456 1622L437 1636Q434 1640 436 1644L480 1718Q482 1723 488 1722L522 1717L588 1676Q592 1672 590 1665L572 1622ZM470 1700L546 1652L572 1622M476 1709L548 1663L575 1635M471 1622L516 1708M528 1622L560 1690M555 1654L582 1675"/>
                    <use href="#d-pin" x="501" y="1634" width="28" height="36"/>
                    <path d="M556 1742Q562 1702 595 1700Q626 1702 632 1733Q650 1740 646 1765L642 1780Q638 1786 630 1780L628 1772L568 1778L566 1788Q560 1795 555 1788L552 1775Q536 1760 556 1742ZM565 1741Q568 1712 595 1710Q618 1712 622 1735Z"/><circle cx="564" cy="1758" r="8"/><circle cx="627" cy="1751" r="8"/>
                    <rect x="-11" y="-22" width="22" height="44" rx="11" transform="translate(472 1778) rotate(6)"/><path d="M443 1784Q444 1808 465 1812Q490 1812 496 1790M462 1813V1826M469 1813V1826"/>
                    <text class="doodle-letter" x="0" y="0" font-size="94" transform="translate(716 1738) rotate(-8)">A</text>
                    <text class="doodle-letter" x="0" y="0" font-size="96" transform="translate(642 1706) rotate(-4)">文</text>
                    <path d="M885 1663Q850 1625 862 1615H910Q920 1625 885 1663Q905 1625 925 1640Q938 1650 928 1660Q940 1670 930 1678Q905 1682 887 1665Q920 1680 912 1700L904 1700Q895 1715 887 1700ZM885 1663Q868 1632 848 1645Q842 1658 850 1662Q835 1668 846 1675Q865 1678 885 1663ZM882 1670L845 1708L846 1700Z"/>
                    <circle cx="742" cy="1852" r="62"/><path d="M732 1806Q742 1800 754 1806L750 1830H736ZM700 1830L715 1814L725 1830M785 1830L770 1814L760 1830M574 1828Q585 1800 614 1801Q642 1804 650 1828"/>
                    <path d="M4 1545L45 1552M4 1569L45 1572M16 1645L20 1630Q12 1600 40 1600M16 1645Q10 1685 46 1682M24 1655L20 1674L46 1670M28 1652Q26 1615 45 1608M4 1709L45 1714M4 1728H20L25 1738L45 1741M4 1755L45 1759M14 1775L42 1778L38 1803L12 1800ZM26 1843V1820L38 1815L40 1808M26 1843L24 1856H36L38 1845L46 1847M4 1912L46 1908M4 1930L46 1926M4 1943L46 1938M4 1952L46 1948M4 1982L46 1976M6 2015Q8 2002 18 2000L46 1995M26 2018L46 2016M26 2018V2026L46 2024M32 2036L46 2034M32 2036V2044L46 2043M6 2015L20 2065L46 2063"/>
                    <path d="M352 1628L358 1640L352 1645L368 1646L360 1660L370 1668L360 1676L372 1686L362 1694L370 1704L360 1712L368 1722L358 1735L366 1745L358 1760L364 1775L372 1786Q380 1772 388 1786Q400 1775 406 1786L425 1778Q425 1800 388 1826M52 1621Q50 1680 62 1630M102 1622L110 1629M170 1629L172 1621M250 1621Q300 1610 340 1630"/>
                    <path d="M108 1826Q115 1818 125 1820M175 1819L178 1826M418 1818Q412 1800 418 1800M445 1812Q450 1830 470 1830"/>
                </g>
            </svg>

            <div class="messages">
                <div class="msg in">
                    <p>Boa noite</p><time>21:21</time>
                    <svg class="tail" aria-hidden="true"><use href="#tail"/></svg>
                </div>

                <div class="msg out group">
                    <p>Oiee</p><time>21:21 <svg class="checks" role="img" aria-label="Entregue"><use href="#checks"/></svg></time>
                    <svg class="tail" aria-hidden="true"><use href="#tail"/></svg>
                </div>

                <div class="msg in group">
                    <p>Desculpa o horário</p><time>21:21</time>
                    <svg class="tail" aria-hidden="true"><use href="#tail"/></svg>
                </div>

                <div class="msg out group">
                    <p>Boa noite</p><time>21:22 <svg class="checks" role="img" aria-label="Entregue"><use href="#checks"/></svg></time>
                </div>
                <div class="msg out">
                    <p>Nada</p><time>21:22 <svg class="checks" role="img" aria-label="Entregue"><use href="#checks"/></svg></time>
                </div>
                <div class="msg out">
                    <p>Se tô on eu respondo</p><time>21:22 <svg class="checks" role="img" aria-label="Entregue"><use href="#checks"/></svg></time>
                    <svg class="tail" aria-hidden="true"><use href="#tail"/></svg>
                </div>

                <div class="msg in group">
                    <p>Preciso te contaaar</p><time>21:22</time>
                </div>
                <div class="msg in wide">
                    <p>Usei o roteiro de vendas de curso, e<br>acabei de vender 1 curso por 1.000,00</p><time>21:22</time>
                </div>
                <div class="msg in medium overlap">
                    <p>O meu curso era 600,00 e eu tinha<br>medo de aumentar e não conseguir<br>vender.</p><time>21:22</time>
                    <svg class="tail" aria-hidden="true"><use href="#tail"/></svg>
                </div>

                <div class="unread">MENSAGENS NÃO LIDAS: 3</div>

                <div class="msg in wide overlap group">
                    <p>Resolvi reestrurar ele e usei o roteiro e<br>acabei de vender. E muito mais fácil que<br>o de 600 <svg class="emoji" role="img" aria-label="😊"><use href="#emoji-blush"/></svg></p><time>21:23</time>
                </div>
                <div class="msg in stickers">
                    <p>
                        <svg role="img" aria-label="🤩"><use href="#emoji-star"/></svg>
                        <svg role="img" aria-label="🤩"><use href="#emoji-star"/></svg>
                        <svg role="img" aria-label="🤩"><use href="#emoji-star"/></svg>
                    </p>
                    <time>21:23</time>
                </div>
                <div class="msg in wide overlap">
                    <p>Muito obrigadaaa, estou amando fazer<br>parte da agência e muito satisfeita com<br>os resultados , e olha que só iniciamos
                        <span class="emoji-row">
                            <svg class="emoji" role="img" aria-label="🥰"><use href="#emoji-love"/></svg>
                            <svg class="emoji heart-red" role="img" aria-label="❤️"><use href="#emoji-heart"/></svg>
                            <svg class="emoji" role="img" aria-label="🫶🏼"><use href="#emoji-hands"/></svg>
                            <svg class="emoji heart-white" role="img" aria-label="🤍"><use href="#emoji-heart"/></svg>
                        </span>
                    </p>
                    <time>21:24</time>
                </div>
            </div>
        </div>
    </main>
</body>
</html>
```
FILE: styles.css
```
* {
    box-sizing: border-box;
}

body {
    margin: 0;
    background-color: #fff;
    font-family: Inter, "Liberation Sans", sans-serif;
}

p {
    margin: 0;
}

.sprite {
    position: absolute;
}

/* moldura em degradê */
.frame {
    height: 100vh;
    padding: 4px;
    border-radius: 60px;
    background: linear-gradient(90deg, #ff1a12, #ff5a00 50%, #ff6a00 75%);
}

.chat {
    position: relative;
    height: 100%;
    overflow: hidden;
    border-radius: 56px;
    background: linear-gradient(#bab9b5, #bdb9b3 20%, #bcb8b2 65%, #bfb6b0 75%, #bfb6b0);
}

.wallpaper {
    position: absolute;
    inset: -4px;
    width: calc(100% + 8px);
    height: calc(100% + 8px);
}

.wallpaper g {
    fill: none;
    stroke: #948f88;
    stroke-opacity: 0.32;
    stroke-width: 3px;
    stroke-linejoin: round;
    stroke-linecap: round;
}

.doodle-letter {
    font-family: Inter, "Noto Sans CJK SC", sans-serif;
    font-weight: 800;
}

.doodle-clock {
    font-family: "Liberation Mono", monospace;
}

/* lista rolada: a primeira mensagem fica cortada no topo */
.messages {
    position: relative;
    display: flex;
    flex-direction: column;
    margin-top: -69px;
}

.msg {
    position: relative;
    display: flex;
    flex-wrap: wrap;
    align-items: flex-end;
    column-gap: 37px;
    margin: 10px 41px 0;
    padding: 15px 29px 21px;
    border-radius: 34px;
    color: #fff;
    font-size: 45px;
    line-height: 62px;
    box-shadow: 0 1px 3px rgba(40, 30, 30, 0.4);
}

.msg.group {
    margin-top: 35px;
}

.in {
    align-self: flex-start;
    background-color: #363636;
    fill: #363636;
}

.out {
    align-self: flex-end;
    background-color: #005046;
    fill: #005046;
}

.wide {
    width: 917px;
    max-width: calc(100% - 82px);
}

.medium {
    width: 861px;
    max-width: calc(100% - 82px);
}

.msg time {
    display: flex;
    align-items: center;
    gap: 10px;
    margin-left: auto;
    padding-top: 20px;
    color: #9b9aa4;
    font-size: 34px;
    font-variant-numeric: tabular-nums;
    line-height: 28px;
}

.msg.out time {
    color: #86aaa5;
}

/* hora na mesma linha do fim do texto */
.overlap {
    display: grid;
}

.overlap p,
.overlap time {
    grid-area: 1 / 1;
}

.overlap time {
    align-self: end;
}

.tail {
    position: absolute;
    bottom: 0;
    left: -16px;
    width: 30px;
    height: 42px;
}

.out .tail {
    left: auto;
    right: -16px;
    transform: scaleX(-1);
}

.checks {
    width: 44px;
    height: 32px;
    margin: -2px 0;
    color: #6a9992;
}

.emoji {
    width: 56px;
    height: 54px;
    vertical-align: -10px;
}

.emoji-row {
    display: flex;
    align-items: center;
    gap: 9px;
    height: 62px;
}

.heart-red {
    fill: url(#red-heart);
}

.heart-white {
    fill: url(#white-heart);
}

.stickers {
    flex-direction: column;
}

.stickers p {
    display: flex;
    gap: 12px;
    padding: 10px 0 14px;
}

.stickers svg {
    width: 76px;
    height: 80px;
}

.unread {
    margin-top: 37px;
    padding: 12px 0;
    border-bottom: 3px solid #887e73;
    background-color: #9a8f82;
    color: #e9e8f6;
    font-size: 41px;
    line-height: 60px;
    text-align: center;
}
```
